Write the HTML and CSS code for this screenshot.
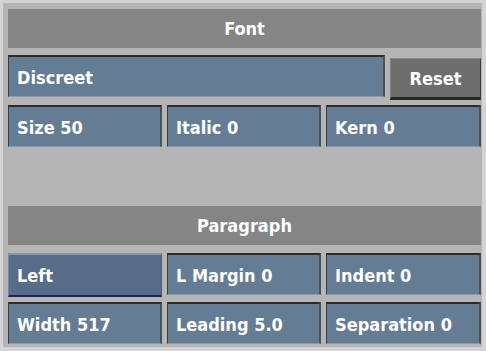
FILE: index.html
```html
<!DOCTYPE html>
<html lang="en">
<head>
    <meta charset="UTF-8">
    <title>Text Settings</title>
    <link rel="stylesheet" href="styles.css">
</head>
<body>
    <div class="panel">
        <div class="section-title">Font</div>
        <div class="font-row">
            <div class="field">Discreet</div>
            <div class="button">Reset</div>
        </div>
        <div class="cells">
            <div class="field">Size 50</div>
            <div class="field">Italic 0</div>
            <div class="field">Kern 0</div>
        </div>

        <div class="section-title para-title">Paragraph</div>
        <div class="cells first">
            <div class="field selected">Left</div>
            <div class="field">L Margin 0</div>
            <div class="field">Indent 0</div>
        </div>
        <div class="cells">
            <div class="field">Width 517</div>
            <div class="field">Leading 5.0</div>
            <div class="field">Separation 0</div>
        </div>
    </div>
</body>
</html>
```

FILE: styles.css
```css
/* General Reset */
* {
    margin: 0;
    padding: 0;
    box-sizing: border-box;
}

body {
    font-family: 'DejaVu Sans Condensed', 'DejaVu Sans', sans-serif;
    background: #b5b5b5;
    color: white;
    width: 486px;
    height: 351px;
    overflow: hidden;
}

.panel {
    width: 486px;
    height: 351px;
    background: #b5b5b5;
    border: 3px solid #d4d4d4;
    border-right-width: 4px;
    border-bottom-width: 4px;
    padding: 6px 1px 2px 5px;
}

.section-title {
    height: 39px;
    background: #858585;
    display: flex;
    align-items: center;
    justify-content: center;
    font-size: 18px;
    font-weight: bold;
}

.para-title {
    margin-top: 59px;
}

.font-row {
    display: flex;
    gap: 5px;
    margin-top: 7px;
    height: 45px;
}

.font-row .field {
    flex: 1;
    height: 42px;
}

.cells {
    display: grid;
    grid-template-columns: 154px 154px 155px;
    gap: 5px;
    margin-top: 5px;
}

.cells.first {
    margin-top: 8px;
}

.field {
    height: 42px;
    background: #657c95;
    border-top: 2px solid #2b2b2b;
    border-left: 1px solid #3c3c3c;
    border-right: 2px solid #48525e;
    border-bottom: 1px solid #8c9aab;
    display: flex;
    align-items: center;
    padding-left: 8px;
    padding-top: 1px;
    font-size: 18px;
    font-weight: bold;
}

.field.selected {
    height: 44px;
    background: #566c88;
    border-top: 2px solid #8094ad;
    border-left: 1px solid #7488a2;
    border-right: 1px solid #4a5c74;
    border-bottom: 2px solid #1e2250;
}

.button {
    width: 91px;
    height: 42px;
    margin-top: 3px;
    background: #6e6e6e;
    border-top: 1px solid #8a8a8a;
    border-left: 1px solid #808080;
    border-right: 1px solid #3c3c3c;
    border-bottom: 3px solid #262626;
    display: flex;
    align-items: center;
    justify-content: center;
    font-size: 18px;
    font-weight: bold;
}
```
